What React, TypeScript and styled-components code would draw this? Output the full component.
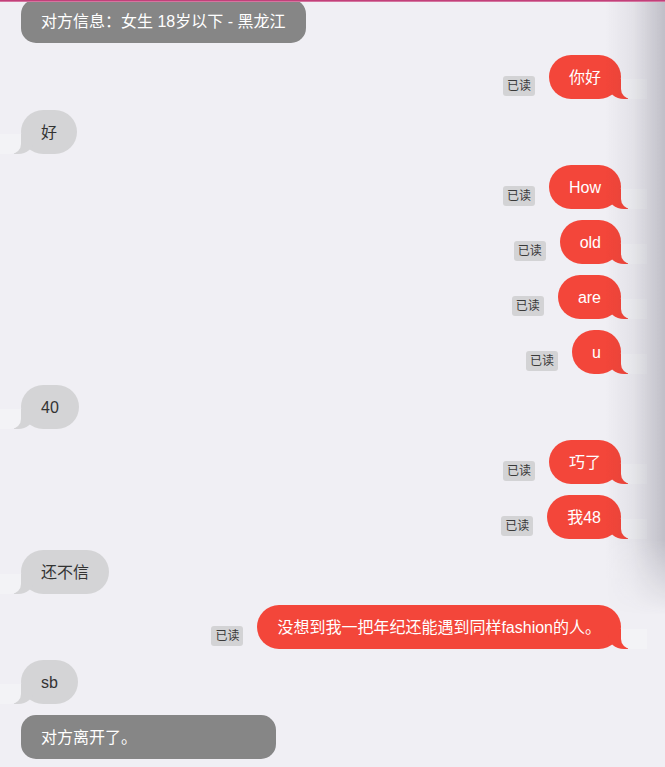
import React from "react";
import styled, { createGlobalStyle } from "styled-components";

const Global = createGlobalStyle`
  html, body { margin: 0; padding: 0; background: #f0eff4; }
  body { font-family: "Liberation Sans", "Noto Sans CJK SC", Arial, sans-serif; overflow: hidden; }
`;

const RED = "#f3463a";
const GRAY = "#d4d4d6";
const MASK = "#f3f3f6";

const Page = styled.div`
  position: relative;
  width: 665px;
  height: 767px;
  overflow: hidden;
  background: #f0eff4;
`;

const TopLine = styled.div`
  position: absolute;
  top: 0;
  left: 0;
  right: 0;
  height: 2px;
  background: linear-gradient(to bottom, #c2407a 0, #c2407a 1px, #e7a8c4 2px);
  z-index: 5;
`;

const EdgeShadow = styled.div`
  position: absolute;
  top: 0;
  right: 0;
  width: 60px;
  height: 615px;
  background: linear-gradient(to right, rgba(40, 40, 60, 0) 0%, rgba(40, 40, 60, 0.06) 45%, rgba(40, 40, 60, 0.24) 100%);
  -webkit-mask-image: linear-gradient(to bottom, #000 0, #000 540px, transparent 615px);
  mask-image: linear-gradient(to bottom, #000 0, #000 540px, transparent 615px);
  pointer-events: none;
  z-index: 4;
`;

const Thread = styled.div`
  display: flex;
  flex-direction: column;
  gap: 11px;
  padding: 0 44px 0 21px;
`;

const SystemNote = styled.div<{ $w: number; $first?: boolean }>`
  width: ${(p) => p.$w}px;
  height: 44px;
  box-sizing: border-box;
  margin-top: ${(p) => (p.$first ? "-1px" : "0")};
  margin-bottom: ${(p) => (p.$first ? "1px" : "0")};
  padding: 0 20px;
  border-radius: 15px;
  background: #868686;
  color: #fff;
  font-size: 16px;
  line-height: 45px;
  white-space: nowrap;
  overflow: hidden;
`;

const Row = styled.div<{ $mine?: boolean }>`
  display: flex;
  align-items: flex-end;
  justify-content: ${(p) => (p.$mine ? "flex-end" : "flex-start")};
  gap: 14px;
`;

const ReadBadge = styled.span`
  height: 20px;
  line-height: 20px;
  padding: 0 4px;
  margin-bottom: 3px;
  border-radius: 3px;
  background: #d3d3d5;
  color: #3a3a3a;
  font-size: 12px;
`;

const Bubble = styled.div<{ $mine?: boolean }>`
  position: relative;
  z-index: 0;
  height: 44px;
  line-height: 46px;
  padding: 0 20px;
  border-radius: 22px;
  background: ${(p) => (p.$mine ? RED : GRAY)};
  color: ${(p) => (p.$mine ? "#fff" : "#333")};
  font-size: 16px;
  white-space: nowrap;

  &::before {
    content: "";
    position: absolute;
    z-index: -1;
    bottom: 0;
    width: 20px;
    height: 20px;
    background: ${(p) => (p.$mine ? RED : GRAY)};
    ${(p) =>
      p.$mine
        ? "right: -7px; border-bottom-left-radius: 16px 14px;"
        : "left: -7px; border-bottom-right-radius: 16px 14px;"}
  }

  &::after {
    content: "";
    position: absolute;
    z-index: -1;
    bottom: 0;
    width: 26px;
    height: 20px;
    background: ${MASK};
    ${(p) =>
      p.$mine
        ? "right: -26px; border-bottom-left-radius: 10px;"
        : "left: -26px; border-bottom-right-radius: 10px;"}
  }
`;

type Msg = { mine: boolean; text: string };

const messages: Msg[] = [
  { mine: true, text: "你好" },
  { mine: false, text: "好" },
  { mine: true, text: "How" },
  { mine: true, text: "old" },
  { mine: true, text: "are" },
  { mine: true, text: "u" },
  { mine: false, text: "40" },
  { mine: true, text: "巧了" },
  { mine: true, text: "我48" },
  { mine: false, text: "还不信" },
  { mine: true, text: "没想到我一把年纪还能遇到同样fashion的人。" },
  { mine: false, text: "sb" },
];

export default function App() {
  return (
    <>
      <Global />
      <Page>
        <TopLine />
        <EdgeShadow />
        <Thread>
          <SystemNote $w={285} $first>
            对方信息：女生 18岁以下 - 黑龙江
          </SystemNote>
          {messages.map((m, i) => (
            <Row key={i} $mine={m.mine}>
              {m.mine && <ReadBadge>已读</ReadBadge>}
              <Bubble $mine={m.mine}>{m.text}</Bubble>
            </Row>
          ))}
          <SystemNote $w={255}>对方离开了。</SystemNote>
        </Thread>
      </Page>
    </>
  );
}
